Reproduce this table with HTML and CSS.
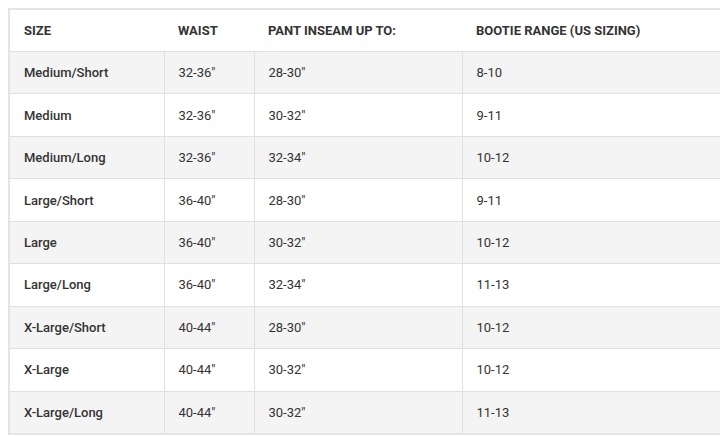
FILE: index.html
```html
<!DOCTYPE html>
<html>
<head>
<meta charset="utf-8">
<link rel="stylesheet" href="styles.css">
</head>
<body>
<div class="wrap">
<table class="size-table">
  <colgroup>
    <col class="c1"><col class="c2"><col class="c3"><col class="c4">
  </colgroup>
  <thead>
    <tr><th>SIZE</th><th>WAIST</th><th>PANT INSEAM UP TO:</th><th>BOOTIE RANGE (US SIZING)</th></tr>
  </thead>
  <tbody>
    <tr><td class="name">Medium/Short</td><td>32-36"</td><td>28-30"</td><td>8-10</td></tr>
    <tr><td class="name">Medium</td><td>32-36"</td><td>30-32"</td><td>9-11</td></tr>
    <tr><td class="name">Medium/Long</td><td>32-36"</td><td>32-34"</td><td>10-12</td></tr>
    <tr><td class="name">Large/Short</td><td>36-40"</td><td>28-30"</td><td>9-11</td></tr>
    <tr><td class="name">Large</td><td>36-40"</td><td>30-32"</td><td>10-12</td></tr>
    <tr><td class="name">Large/Long</td><td>36-40"</td><td>32-34"</td><td>11-13</td></tr>
    <tr><td class="name">X-Large/Short</td><td>40-44"</td><td>28-30"</td><td>10-12</td></tr>
    <tr><td class="name">X-Large</td><td>40-44"</td><td>30-32"</td><td>10-12</td></tr>
    <tr><td class="name">X-Large/Long</td><td>40-44"</td><td>30-32"</td><td>11-13</td></tr>
  </tbody>
</table>
</div>
</body>
</html>
```
FILE: styles.css
```css
html, body {
  margin: 0;
  padding: 0;
  background: #ffffff;
  overflow: hidden;
}
.wrap {
  padding: 8px 0 0 8px;
}
.size-table {
  width: 800px;
  border-collapse: collapse;
  table-layout: fixed;
  font-family: Roboto, "Liberation Sans", sans-serif;
  font-size: 13px;
  color: #333333;
  border: 2px solid #e4e4e4;
}
.c1 { width: 155px; }
.c2 { width: 90px; }
.c3 { width: 208px; }
.c4 { width: 347px; }
.size-table th {
  text-align: left;
  font-weight: 700;
  height: 41px;
  padding: 0 14px;
  border-bottom: 1px solid #e0e0e0;
  background: #ffffff;
}
.size-table td {
  height: 41.44px;
  padding: 0 14px;
  border: 1px solid #e0e0e0;
  border-top: none;
}
.size-table td:first-child { border-left: none; }
.size-table td.name { font-weight: 500; }
.size-table tbody tr:nth-child(odd) td { background: #f4f4f4; }
.size-table tbody tr:nth-child(even) td { background: #ffffff; }
```
